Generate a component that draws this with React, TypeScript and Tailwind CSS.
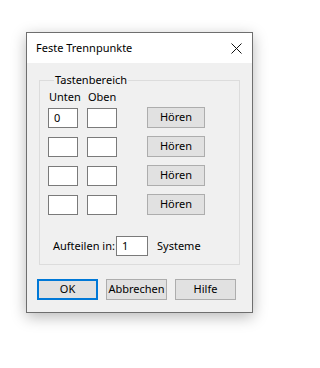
import React from 'react';

const font = "font-['Segoe_UI','Noto_Sans',sans-serif]";

const Edit: React.FC<{ value?: string; w?: string }> = ({ value = '', w = 'w-[30px]' }) => (
  <div className={`${w} h-[20px] border border-[#7a7a7a] bg-white pl-[5px] text-[11px] leading-[18px] text-black`}>
    {value}
  </div>
);

const Btn: React.FC<{ label: string; w?: string; def?: boolean }> = ({ label, w = 'w-[61px]', def }) => (
  <div
    className={`${w} h-[21px] flex items-center justify-center bg-[#e1e1e1] text-[11px] text-black ${
      def ? 'border-2 border-[#0078d7]' : 'border border-[#adadad]'
    }`}
  >
    {label}
  </div>
);

export default function App() {
  const rows = ['0', '', '', ''];
  return (
    <div className={`min-h-screen bg-white pt-[32px] pl-[26px] ${font}`}>
      <div className="w-[227px] h-[281px] border border-[#6e6e6e] bg-[#f0f0f0] flex flex-col shadow-[0_4px_14px_rgba(0,0,0,0.28)]">
        {/* title bar */}
        <div className="h-[30px] bg-white flex items-center justify-between pl-[9px] pr-[10px]">
          <span className="text-[11px] text-black">Feste Trennpunkte</span>
          <svg width="11" height="11" viewBox="0 0 11 11">
            <path d="M0.5 0.5L10.5 10.5M10.5 0.5L0.5 10.5" stroke="#111" strokeWidth="1" />
          </svg>
        </div>

        <div className="flex flex-col pl-[12px] pt-[9px]">
          <fieldset className="w-[201px] h-[193px] border border-[#dcdcdc] pl-[8px]">
            <legend className="ml-[6px] px-[1px] text-[11px] text-black leading-[16px]">Tastenbereich</legend>
            <div className="flex text-[11px] text-black leading-[16px] mt-[1px] pl-[1px]">
              <span className="w-[39px]">Unten</span>
              <span>Oben</span>
            </div>
            <div className="flex flex-col gap-[8px] mt-[2px]">
              {rows.map((v, i) => (
                <div key={i} className="flex items-start">
                  <div className="mt-[1px] flex gap-[9px]">
                    <Edit value={v} />
                    <Edit />
                  </div>
                  <div className="ml-[30px]">
                    <Btn label="Hören" w="w-[58px]" />
                  </div>
                </div>
              ))}
            </div>
            <div className="flex items-center mt-[21px] pl-[5px] text-[11px] text-black whitespace-nowrap">
              <span className="w-[63px]">Aufteilen in:</span>
              <Edit value="1" w="w-[32px]" />
              <span className="ml-[9px]">Systeme</span>
            </div>
          </fieldset>

          <div className="flex gap-[8px] mt-[14px] -ml-[2px]">
            <Btn label="OK" def />
            <Btn label="Abbrechen" />
            <Btn label="Hilfe" />
          </div>
        </div>
      </div>
    </div>
  );
}
